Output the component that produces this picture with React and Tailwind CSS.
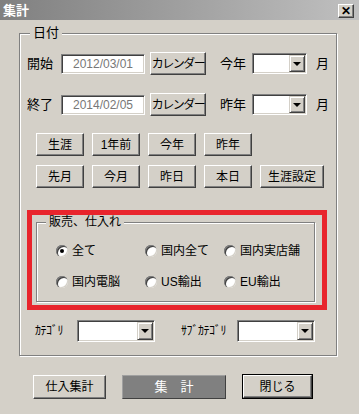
import { useState } from "react";

const FONT = { fontFamily: '"Liberation Sans", "Noto Sans CJK JP", sans-serif' };

// raised win2k style button
const Btn = ({ children, className = "" }) => (
  <button
    className={`flex items-center justify-center h-[23px] bg-[#d4d0c8] border border-t-white border-l-white border-r-[#404040] border-b-[#404040] shadow-[inset_-1px_-1px_0_#808080] text-[12px] text-black leading-none ${className}`}
  >
    {children}
  </button>
);

const TextBox = ({ value }) => (
  <div className="w-[84px] h-[20px] flex items-center justify-center bg-white border border-t-[#808080] border-l-[#808080] border-r-white border-b-white shadow-[inset_1px_1px_0_#404040,inset_-1px_-1px_0_#d4d0c8] text-[12px] text-[#777]">
    {value}
  </div>
);

const Combo = ({ className = "" }) => (
  <div
    className={`flex items-stretch bg-white border border-t-[#808080] border-l-[#808080] border-r-white border-b-white shadow-[inset_1px_1px_0_#404040,inset_-1px_-1px_0_#d4d0c8] p-[1px] ${className}`}
  >
    <div className="flex-1" />
    <div className="w-[16px] flex items-center justify-center bg-[#d4d0c8] border border-t-[#d4d0c8] border-l-[#d4d0c8] border-r-[#404040] border-b-[#404040] shadow-[inset_1px_1px_0_#fff,inset_-1px_-1px_0_#808080]">
      <div className="w-0 h-0 border-l-[4px] border-r-[4px] border-t-[4px] border-l-transparent border-r-transparent border-t-black" />
    </div>
  </div>
);

const Radio = ({ label, checked, onClick }) => (
  <div className="flex items-center gap-[4px] cursor-default" onClick={onClick}>
    <div className="w-[12px] h-[12px] rounded-full bg-white flex items-center justify-center shadow-[inset_1px_1px_0_#808080,inset_2px_2px_0_#404040,inset_-1px_-1px_0_#d4d0c8]">
      {checked && <div className="w-[4px] h-[4px] rounded-full bg-black" />}
    </div>
    <span className="text-[12px] leading-none">{label}</span>
  </div>
);

export default function App() {
  const [kind, setKind] = useState("全て");
  const radios = ["全て", "国内全て", "国内実店舗", "国内電脳", "US輸出", "EU輸出"];

  return (
    <div className="w-[359px] h-[414px] bg-[#d4d0c8] flex flex-col text-black overflow-hidden" style={FONT}>
      {/* title bar */}
      <div className="h-[20px] flex items-center justify-between pl-[3px] pr-[5px] bg-gradient-to-r from-[#808080] to-[#c0c0c0]">
        <span className="text-white font-bold text-[13px] leading-none">集計</span>
        <div className="w-[16px] h-[14px] mt-[2px] flex items-center justify-center bg-[#d4d0c8] border border-t-white border-l-white border-r-[#404040] border-b-[#404040] shadow-[inset_-1px_-1px_0_#808080]">
          <span className="text-[12px] font-bold leading-none mt-[-1px]">✕</span>
        </div>
      </div>

      {/* 日付 group */}
      <div className="relative ml-[19px] mt-[13px] w-[318px] h-[323px] border border-[#808080] shadow-[inset_1px_1px_0_#fff,1px_1px_0_#fff] pl-[7px]">
        <span className="absolute -top-[8px] left-[10px] px-[3px] bg-[#d4d0c8] text-[13px] leading-none">日付</span>

        <div className="flex items-center h-[23px] mt-[18px]">
          <span className="text-[13px] w-[34px]">開始</span>
          <TextBox value="2012/03/01" />
          <Btn className="w-[56px] ml-[5px] tracking-[-1.5px]">カレンダー</Btn>
          <span className="text-[13px] ml-[14px] w-[32px]">今年</span>
          <Combo className="w-[55px] h-[21px]" />
          <span className="text-[13px] ml-[9px]">月</span>
        </div>

        <div className="flex items-center h-[23px] mt-[18px]">
          <span className="text-[13px] w-[34px]">終了</span>
          <TextBox value="2014/02/05" />
          <Btn className="w-[56px] ml-[5px] tracking-[-1.5px]">カレンダー</Btn>
          <span className="text-[13px] ml-[14px] w-[32px]">昨年</span>
          <Combo className="w-[55px] h-[21px]" />
          <span className="text-[13px] ml-[9px]">月</span>
        </div>

        <div className="flex gap-[8px] ml-[9px] mt-[17px]">
          <Btn className="w-[48px]">生涯</Btn>
          <Btn className="w-[48px]">1年前</Btn>
          <Btn className="w-[48px]">今年</Btn>
          <Btn className="w-[48px]">昨年</Btn>
        </div>
        <div className="flex gap-[8px] ml-[9px] mt-[9px]">
          <Btn className="w-[48px]">先月</Btn>
          <Btn className="w-[48px]">今月</Btn>
          <Btn className="w-[48px]">昨日</Btn>
          <Btn className="w-[48px]">本日</Btn>
          <Btn className="w-[64px]">生涯設定</Btn>
        </div>

        {/* red highlight around 販売、仕入れ */}
        <div className="w-[300px] h-[100px] mt-[22px] border-[5px] border-[#e8242c] pl-[4px] pt-[7px]">
          <div className="relative w-[279px] h-[80px] border border-[#808080] shadow-[inset_1px_1px_0_#fff,1px_1px_0_#fff]">
            <span className="absolute -top-[7px] left-[9px] px-[3px] bg-[#d4d0c8] text-[12px] leading-none">販売、仕入れ</span>
            <div className="grid grid-cols-[89px_79px_1fr] gap-y-[11px] pl-[19px] mt-[18px]">
              {radios.map((r) => (
                <div key={r} className="h-[20px] flex items-center">
                  <Radio label={r} checked={kind === r} onClick={() => setKind(r)} />
                </div>
              ))}
            </div>
          </div>
        </div>

        <div className="flex items-center h-[22px] mt-[10px] pl-[8px]">
          <span className="text-[12px] w-[42px] tracking-[-0.5px]">ｶﾃｺﾞﾘ</span>
          <Combo className="w-[78px] h-[22px]" />
          <span className="text-[12px] ml-[26px] w-[56px] tracking-[-0.5px]">ｻﾌﾞｶﾃｺﾞﾘ</span>
          <Combo className="w-[78px] h-[22px]" />
        </div>
      </div>

      {/* bottom buttons */}
      <div className="flex items-center mt-[18px] ml-[33px]">
        <Btn className="w-[73px] h-[24px]">仕入集計</Btn>
        <button className="ml-[16px] w-[104px] h-[24px] flex items-center justify-center bg-[#808080] border border-t-[#a0a0a0] border-l-[#a0a0a0] border-r-[#404040] border-b-[#404040] text-white text-[13px] leading-none">
          集　計
        </button>
        <div className="ml-[16px] border border-black">
          <Btn className="w-[69px] h-[22px]">閉じる</Btn>
        </div>
      </div>
    </div>
  );
}
